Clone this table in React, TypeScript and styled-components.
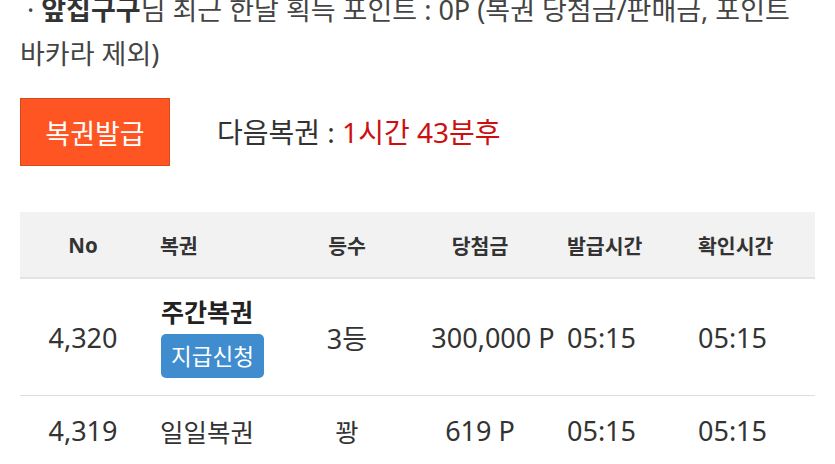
import React from "react";
import styled, { createGlobalStyle } from "styled-components";

const GlobalStyle = createGlobalStyle`
  html, body { margin: 0; padding: 0; background: #ffffff; overflow: hidden; }
  body {
    font-family: "Noto Sans", "Noto Sans CJK KR", sans-serif;
    color: #333333;
  }
`;

const Page = styled.div`
  width: 835px;
  height: 464px;
  padding: 0 20px;
  box-sizing: border-box;
  overflow: hidden;
`;

const Intro = styled.p`
  margin: -12px 0 0 0;
  font-size: 27px;
  line-height: 44px;
  color: #444444;
  white-space: nowrap;
`;

const Nick = styled.b`
  font-weight: 700;
  color: #333333;
`;

const ActionRow = styled.div`
  display: flex;
  align-items: center;
  gap: 47px;
  margin-top: 22px;
`;

const IssueButton = styled.button`
  width: 150px;
  height: 68px;
  box-sizing: border-box;
  background: #ff5522;
  border: 1px solid #d9471c;
  color: #ffffff;
  font-family: "Noto Sans", "Noto Sans CJK KR", sans-serif;
  font-size: 27px;
  padding: 0;
  cursor: pointer;
`;

const NextInfo = styled.div`
  font-size: 28px;
  color: #333333;
  margin-top: -2px;
`;

const Red = styled.span`
  color: #cc1010;
`;

const Table = styled.div`
  margin-top: 46px;
  width: 795px;
`;

const Row = styled.div<{ $head?: boolean; $h: number }>`
  display: grid;
  grid-template-columns: 126px 154px 94px 172px 132px 1fr;
  align-items: center;
  height: ${(p) => p.$h}px;
  background: ${(p) => (p.$head ? "#f2f2f2" : "#ffffff")};
  border-bottom: ${(p) => (p.$head ? "2px solid #e3e3e3" : "1px solid #dedede")};
`;

const Cell = styled.div<{ $align?: "left" | "center"; $pad?: number; $head?: boolean; $num?: boolean }>`
  text-align: ${(p) => p.$align ?? "center"};
  padding-left: ${(p) => p.$pad ?? 0}px;
  white-space: nowrap;
  font-size: ${(p) => (p.$head ? 20.5 : p.$num ? 27 : 25.5)}px;
  font-weight: ${(p) => (p.$head ? 700 : 400)};
  color: #333333;
`;

const TicketCell = styled.div`
  display: flex;
  flex-direction: column;
  align-items: flex-start;
  gap: 7px;
  padding-left: 15px;
`;

const TicketName = styled.div`
  font-size: 25px;
  font-weight: 700;
  color: #222222;
  line-height: 30px;
`;

const ClaimButton = styled.button`
  height: 44px;
  width: 103px;
  background: #3f8ccf;
  border: none;
  border-radius: 5px;
  color: #ffffff;
  font-family: "Noto Sans", "Noto Sans CJK KR", sans-serif;
  font-size: 22.5px;
  padding: 0;
`;

const heads = ["No", "복권", "등수", "당첨금", "발급시간", "확인시간"];
const aligns: ("left" | "center")[] = ["center", "left", "center", "center", "left", "left"];
const pads = [0, 14, 0, 0, 1, 0];

export default function App() {
  return (
    <>
      <GlobalStyle />
      <Page>
        <Intro>
          &nbsp;· <Nick>앞집구구</Nick>님 최근 한달 획득 포인트 : 0P (복권 당첨금/판매금, 포인트
          <br />
          바카라 제외)
        </Intro>
        <ActionRow>
          <IssueButton>복권발급</IssueButton>
          <NextInfo>
            다음복권 : <Red>1시간 43분후</Red>
          </NextInfo>
        </ActionRow>
        <Table>
          <Row $head $h={65}>
            {heads.map((h, i) => (
              <Cell key={h} $head $align={aligns[i]} $pad={pads[i]}>
                {h}
              </Cell>
            ))}
          </Row>
          <Row $h={116}>
            <Cell $num>4,320</Cell>
            <TicketCell>
              <TicketName>주간복권</TicketName>
              <ClaimButton>지급신청</ClaimButton>
            </TicketCell>
            <Cell $num>3등</Cell>
            <Cell $num $pad={26}>300,000 P</Cell>
            <Cell $num $align="left" $pad={1}>05:15</Cell>
            <Cell $num $align="left">05:15</Cell>
          </Row>
          <Row $h={68}>
            <Cell $num>4,319</Cell>
            <Cell $align="left" $pad={14}>일일복권</Cell>
            <Cell>꽝</Cell>
            <Cell $num>619 P</Cell>
            <Cell $num $align="left" $pad={1}>05:15</Cell>
            <Cell $num $align="left">05:15</Cell>
          </Row>
        </Table>
      </Page>
    </>
  );
}
